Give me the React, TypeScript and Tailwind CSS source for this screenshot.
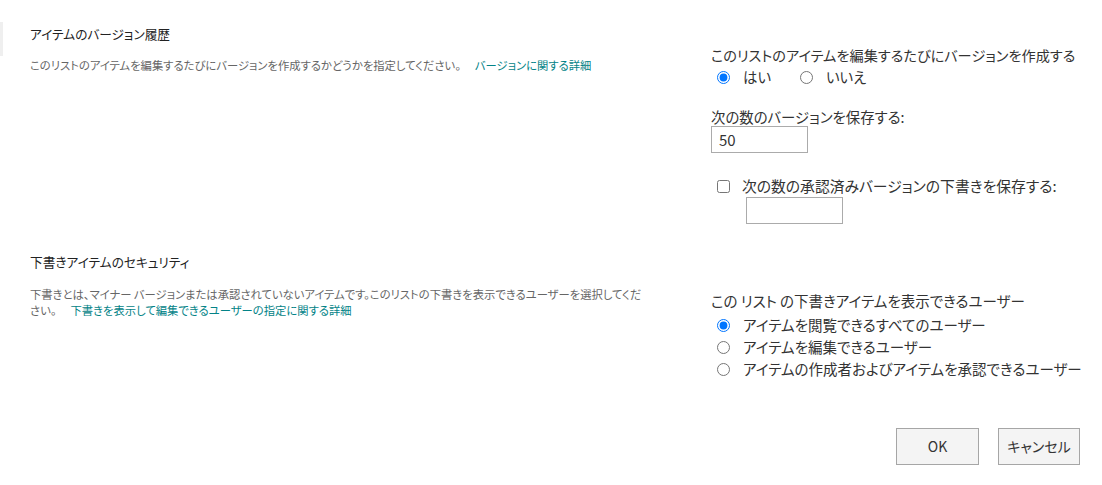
import React from "react";

const font = "font-['Noto_Sans_CJK_JP','Noto_Sans',sans-serif] [font-feature-settings:'palt']";

function Radio({ checked, name, label }: { checked?: boolean; name: string; label: string }) {
  return (
    <label className="flex items-center">
      <input type="radio" name={name} defaultChecked={checked} className="m-0 h-[13px] w-[13px] accent-[#0075ff]" />
      <span className="ml-[13px]">{label}</span>
    </label>
  );
}

export default function App() {
  return (
    <div className={`w-[1102px] h-[485px] bg-white flex ${font} text-[#333]`}>
      <div className="w-[3px] h-[34px] mt-[22px] bg-[#efefef] shrink-0" />
      <div className="pl-[27px] flex-1 flex flex-col">
        {/* Section 1 */}
        <div className="flex">
          <div className="w-[633px] pt-[24px]">
            <div className="text-[12.7px] leading-[20px] text-[#222]">アイテムのバージョン履歴</div>
            <div className="mt-[13px] text-[11.34px] leading-[16px] text-[#666]">
              このリストのアイテムを編集するたびにバージョンを作成するかどうかを指定してください。
              <a className="ml-[14px] text-[#038387]">バージョンに関する詳細</a>
            </div>
          </div>
          <div className="ml-[48px] pt-[45px] text-[14.4px] leading-[20px]">
            <div className="text-[14.2px]">このリストのアイテムを編集するたびにバージョンを作成する</div>
            <div className="mt-[2px] flex pl-[6px] gap-[29px]">
              <Radio name="v" checked label="はい" />
              <Radio name="v" label="いいえ" />
            </div>
            <div className="mt-[20px]">次の数のバージョンを保存する:</div>
            <input
              defaultValue="50"
              className="mt-[-1px] block w-[97px] h-[27px] border border-[#ababab] px-[7px] text-[15px] text-[#333] outline-none"
            />
            <div className="mt-[23px] flex items-start">
              <input type="checkbox" className="ml-[6px] mt-[4px] h-[13px] w-[13px]" />
              <div className="ml-[12px]">
                <div className="text-[14.8px]">次の数の承認済みバージョンの下書きを保存する:</div>
                <input className="mt-[1px] ml-[4px] block w-[97px] h-[27px] border border-[#ababab] outline-none" />
              </div>
            </div>
          </div>
        </div>
        {/* Section 2 */}
        <div className="flex">
          <div className="w-[616px] pt-[28px]">
            <div className="text-[12.7px] leading-[20px] text-[#222]">下書きアイテムのセキュリティ</div>
            <div className="mt-[14px] text-[11.34px] leading-[16px] text-[#666]">
              下書きとは、マイナー バージョンまたは承認されていないアイテムです。このリストの下書きを表示できるユーザーを選択してください。
              <a className="ml-[14px] text-[#038387]">下書きを表示して編集できるユーザーの指定に関する詳細</a>
            </div>
          </div>
          <div className="ml-[65px] pt-[67px] text-[14.5px] leading-[20px]">
            <div>この リスト の下書きアイテムを表示できるユーザー</div>
            <div className="mt-[4px] pl-[6px] flex flex-col gap-[2px]">
              <Radio name="d" checked label="アイテムを閲覧できるすべてのユーザー" />
              <Radio name="d" label="アイテムを編集できるユーザー" />
              <Radio name="d" label="アイテムの作成者およびアイテムを承認できるユーザー" />
            </div>
          </div>
        </div>
        {/* Buttons */}
        <div className="flex justify-end gap-[19px] pr-[22px] mt-[49px]">
          <button className="w-[83px] h-[37px] border border-[#a6a6a6] bg-[#f4f4f4] text-[14px] text-[#333]">OK</button>
          <button className="w-[82px] h-[37px] border border-[#a6a6a6] bg-[#f4f4f4] text-[14px] text-[#333]">キャンセル</button>
        </div>
      </div>
    </div>
  );
}
